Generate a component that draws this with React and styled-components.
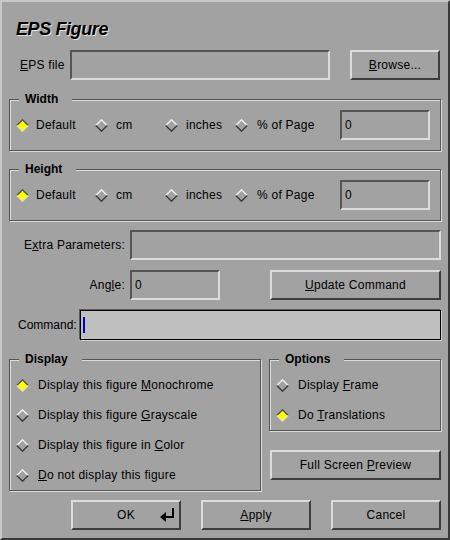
import React from "react";
import styled, { createGlobalStyle } from "styled-components";

const BG = "#a2a2a2";
const LIGHT = "#dcdcdc";

const Global = createGlobalStyle`
  html, body { margin: 0; padding: 0; background: ${BG}; }
  * { box-sizing: border-box; }
`;

const Window = styled.div`
  width: 450px;
  height: 540px;
  border-style: solid;
  border-width: 2px;
  border-color: #c8c8c8 #383838 #383838 #c8c8c8;
  background: ${BG};
  padding: 0 7px;
  display: flex;
  flex-direction: column;
  font-family: "Liberation Sans", Arial, sans-serif;
  font-size: 12px;
  letter-spacing: 0.25px;
  color: #000;
  overflow: hidden;
`;

const Title = styled.div`
  margin-top: 16px;
  padding-left: 7px;
  height: 22px;
  line-height: 22px;
  font-size: 18px;
  font-weight: bold;
  font-style: italic;
  letter-spacing: -0.4px;
  text-shadow: 1px 1px 0 #e2e2e2;
`;

const Row = styled.div`
  display: flex;
  align-items: center;
  height: 30px;
  margin-top: ${(p) => p.$mt || 0}px;
  padding-left: ${(p) => p.$pl || 0}px;
  gap: ${(p) => p.$gap || 0}px;
`;

const Label = styled.span`
  white-space: nowrap;
  width: ${(p) => (p.$w ? `${p.$w}px` : "auto")};
  text-align: ${(p) => p.$align || "left"};
  letter-spacing: ${(p) => (p.$tight ? "0" : "inherit")};
  flex: none;
`;

const U = styled.span`
  text-decoration: underline;
`;

const Field = styled.div`
  height: 30px;
  width: ${(p) => (p.$w ? `${p.$w}px` : "auto")};
  flex: ${(p) => (p.$w ? "none" : "1")};
  border: 2px solid;
  border-color: #555 ${LIGHT} ${LIGHT} #555;
  background: ${BG};
  display: flex;
  align-items: center;
  padding-left: 3px;
`;

const CommandField = styled.div`
  height: 30px;
  flex: 1;
  border: 1px solid #000;
  box-shadow: -1px -1px 0 #5a5a5a, 1px 1px 0 #d0d0d0;
  background: #bfbfbf;
  display: flex;
  align-items: center;
  padding-left: 2px;
`;

const Cursor = styled.span`
  width: 2px;
  height: 16px;
  background: #0000c8;
`;

const Button = styled.button`
  height: 30px;
  width: ${(p) => (p.$w ? `${p.$w}px` : "auto")};
  flex: ${(p) => (p.$w ? "none" : "1")};
  margin-left: ${(p) => p.$ml || 0}px;
  margin-top: ${(p) => p.$mt || 0}px;
  border: 2px solid;
  border-color: ${LIGHT} #3c3c3c #3c3c3c ${LIGHT};
  background: ${BG};
  font-family: "Liberation Sans", Arial, sans-serif;
  font-size: 12px;
  letter-spacing: 0.25px;
  color: #000;
  padding: 0;
  cursor: default;
`;

const WideButton = styled(Button)`
  flex: none;
`;

const OkButton = styled(Button)`
  display: grid;
  grid-template-columns: 1fr auto 1fr;
  align-items: center;
`;

const OkIcon = styled.svg`
  justify-self: end;
  margin-right: 4px;
`;

const Group = styled.div`
  border: 1px solid #555;
  box-shadow: 1px 1px 0 ${LIGHT}, inset 1px 1px 0 ${LIGHT};
  display: flex;
  flex-direction: column;
  margin-top: ${(p) => p.$mt || 0}px;
  padding-bottom: ${(p) => p.$pb || 0}px;
  width: ${(p) => (p.$w ? `${p.$w}px` : "auto")};
  flex: none;
`;

const Legend = styled.span`
  align-self: flex-start;
  margin: -8px 0 0 9px;
  padding: 0 14px 0 6px;
  height: 14px;
  line-height: 14px;
  font-weight: bold;
  letter-spacing: 0;
  background: ${BG};
`;

const UnitRow = styled.div`
  display: grid;
  grid-template-columns: 79px 70px 70px 105px 90px;
  align-items: center;
  height: 30px;
  margin-top: 4px;
  padding-left: 6px;
`;

const RadioItem = styled.div`
  display: flex;
  align-items: center;
  gap: ${(p) => p.$gap || 8}px;
  height: 30px;
  white-space: nowrap;
`;

const RadioList = styled.div`
  display: flex;
  flex-direction: column;
  margin-top: 4px;
  padding-left: 6px;
`;

const DiamondSvg = styled.svg`
  flex: none;
  display: block;
`;

const Bottom = styled.div`
  display: flex;
  gap: 8px;
  margin-top: 19px;
`;

const SideCol = styled.div`
  flex: 1;
  display: flex;
  flex-direction: column;
`;

const ButtonBar = styled.div`
  display: flex;
  justify-content: flex-end;
  gap: 20px;
  margin-top: 9px;
`;

const Diamond = ({ checked }) => (
  <DiamondSvg width="13" height="13" viewBox="0 0 13 13">
    {checked && <polygon points="6.5,1 12,6.5 6.5,12 1,6.5" fill="#ffff00" />}
    <polyline
      points="0.8,6.5 6.5,0.8 12.2,6.5"
      fill="none"
      stroke={checked ? "#505050" : "#f2f2f2"}
      strokeWidth="1.4"
    />
    <polyline
      points="0.8,6.5 6.5,12.2 12.2,6.5"
      fill="none"
      stroke={checked ? "#e6e6a0" : "#3a3a3a"}
      strokeWidth="1.4"
    />
  </DiamondSvg>
);

const Radio = ({ checked, children, gap }) => (
  <RadioItem $gap={gap}>
    <Diamond checked={checked} />
    <span>{children}</span>
  </RadioItem>
);

const UnitGroup = ({ title, mt }) => (
  <Group $mt={mt} $pb={10}>
    <Legend>{title}</Legend>
    <UnitRow>
      <Radio checked gap={7}>Default</Radio>
      <Radio gap={8}>cm</Radio>
      <Radio gap={8}>inches</Radio>
      <Radio gap={9}>% of Page</Radio>
      <Field>0</Field>
    </UnitRow>
  </Group>
);

export default function App() {
  return (
    <>
      <Global />
      <Window>
        <Title>EPS Figure</Title>

        <Row $mt={10} $pl={11}>
          <Label $w={50}>
            <U>E</U>PS file
          </Label>
          <Field $w={260} />
          <Button $w={90} $ml={20}>
            <U>B</U>rowse...
          </Button>
        </Row>

        <UnitGroup title="Width" mt={19} />
        <UnitGroup title="Height" mt={18} />

        <Row $mt={9} $gap={5}>
          <Label $w={116} $align="right">
            E<U>x</U>tra Parameters:
          </Label>
          <Field />
        </Row>

        <Row $mt={10} $gap={5}>
          <Label $w={116} $align="right">
            Ang<U>l</U>e:
          </Label>
          <Field $w={90}>0</Field>
          <Button $ml={45}>
            <U>U</U>pdate Command
          </Button>
        </Row>

        <Row $mt={10} $pl={9} $gap={3}>
          <Label $tight>Command:</Label>
          <CommandField>
            <Cursor />
          </CommandField>
        </Row>

        <Bottom>
          <Group $w={252}>
            <Legend>Display</Legend>
            <RadioList>
              <Radio checked gap={9}>
                Display this figure <U>M</U>onochrome
              </Radio>
              <Radio gap={9}>
                Display this figure <U>G</U>rayscale
              </Radio>
              <Radio gap={9}>
                Display this figure in <U>C</U>olor
              </Radio>
              <Radio gap={9}>
                <U>D</U>o not display this figure
              </Radio>
            </RadioList>
          </Group>
          <SideCol>
            <Group>
              <Legend>Options</Legend>
              <RadioList>
                <Radio gap={9}>
                  Display <U>F</U>rame
                </Radio>
                <Radio checked gap={9}>
                  Do <U>T</U>ranslations
                </Radio>
              </RadioList>
            </Group>
            <WideButton $ml={1} $mt={19}>
              Full Screen <U>P</U>review
            </WideButton>
          </SideCol>
        </Bottom>

        <ButtonBar>
          <OkButton $w={110}>
            <span />
            <span>OK</span>
            <OkIcon width="15" height="14" viewBox="0 0 15 14">
              <path d="M0 9 L6 4 L6 14 Z" fill="#000" />
              <path d="M6 8 H14 V10 H6 Z" fill="#000" />
              <path d="M12 0 H14 V10 H12 Z" fill="#000" />
            </OkIcon>
          </OkButton>
          <Button $w={110}>
            <U>A</U>pply
          </Button>
          <Button $w={110}>Cancel</Button>
        </ButtonBar>
      </Window>
    </>
  );
}
